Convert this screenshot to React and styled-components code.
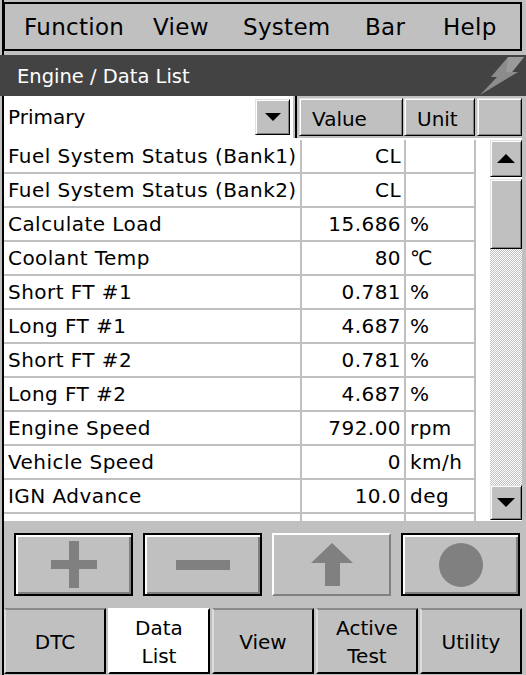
import React from 'react';
import styled, { createGlobalStyle, css } from 'styled-components';

const GRAY = '#c0c0c0';
const DARK = '#808080';

const GlobalStyle = createGlobalStyle`
  html, body { margin: 0; padding: 0; background: ${GRAY}; }
  body { font-family: "DejaVu Sans", Verdana, sans-serif; color: #000; }
  * { box-sizing: border-box; }
`;

const raised = css`
  background: ${GRAY};
  border: 1px solid;
  border-color: #e0e0e0 #000 #000 #e0e0e0;
  box-shadow: inset 1px 1px #fff, inset -1px -1px ${DARK};
`;

const Screen = styled.div`
  width: 526px;
  height: 675px;
  background: ${GRAY};
  display: flex;
  flex-direction: column;
  overflow: hidden;
  font-family: "DejaVu Sans", Verdana, sans-serif;
`;

const MenuArea = styled.div`
  margin-left: 2px;
  border-left: 2px solid #000;
  padding: 2px 4px 4px 0;
`;

const MenuBar = styled.nav`
  height: 49px;
  border: 2px solid #000;
  border-left-width: 1px;
  padding-left: 19px;
  display: grid;
  grid-template-columns: 129px 90px 122px 78px 1fr;
  align-items: center;
`;

const MenuItem = styled.span`
  font-size: 23px;
  letter-spacing: 0.3px;
`;

const TitleBar = styled.header`
  height: 41px;
  background: #434343;
  color: #fff;
  display: flex;
  align-items: center;
  padding-left: 17px;
  padding-top: 2px;
  font-size: 19.5px;
`;

const Bolt = styled.svg`
  margin-left: auto;
  margin-right: 2px;
  align-self: flex-end;
`;

const Body = styled.main`
  flex: 1;
  margin-left: 2px;
  border-left: 2px solid #000;
  display: flex;
  flex-direction: column;
`;

const HeaderRow = styled.div`
  height: 42px;
  display: flex;
  align-items: stretch;
`;

const Combo = styled.div`
  width: 289px;
  background: #fff;
  display: flex;
  align-items: center;
  padding-left: 4px;
  font-size: 20px;
`;

const DropButton = styled.div`
  ${raised};
  margin-left: auto;
  margin-right: 3px;
  width: 35px;
  height: 36px;
  display: flex;
  align-items: center;
  justify-content: center;
`;

const Divider = styled.div`
  width: 2px;
  margin: 0 2px;
  background: #000;
`;

const HeadButton = styled.div`
  ${raised};
  margin-top: 2px;
  margin-bottom: 2px;
  margin-left: ${p => p.$gap}px;
  width: ${p => p.$w}px;
  display: flex;
  align-items: center;
  padding-left: 12px;
  font-size: 20px;
  padding-top: 3px;
`;

const ListArea = styled.div`
  height: 383px;
  width: 518px;
  background: #fff;
  display: flex;
`;

const Table = styled.div`
  width: 472px;
  padding-top: 2px;
  overflow: hidden;
`;

const Row = styled.div`
  display: grid;
  grid-template-columns: 298px 104px 70px;
  height: 34px;
`;

const Cell = styled.div`
  border-right: 2px solid ${GRAY};
  border-bottom: 2px solid ${GRAY};
  display: flex;
  align-items: center;
  font-size: 20px;
  letter-spacing: 0.45px;
  white-space: nowrap;
  overflow: hidden;
  justify-content: ${p => (p.$right ? 'flex-end' : 'flex-start')};
  padding: ${p => (p.$right ? '0 3px 0 0' : '0 0 0 4px')};
`;

const Gutter = styled.div`
  width: 14px;
`;

const ScrollBar = styled.div`
  width: 32px;
  padding: 2px 0 1px;
  display: flex;
  flex-direction: column;
`;

const ScrollButton = styled.div`
  ${raised};
  height: ${p => p.$h}px;
  margin-top: ${p => p.$mt || 0}px;
  display: flex;
  align-items: center;
  justify-content: center;
`;

const Track = styled.div`
  flex: 1;
  background-color: #fff;
  background-image: repeating-conic-gradient(#fff 0 25%, ${GRAY} 0 50%);
  background-size: 2px 2px;
`;

const Controls = styled.div`
  padding: 12px 0 0 10px;
  display: grid;
  grid-template-columns: repeat(4, 119px);
  column-gap: 10px;
`;

const ActionButton = styled.button`
  height: 63px;
  padding: 0;
  background: ${GRAY};
  display: flex;
  align-items: center;
  justify-content: center;
  ${p =>
    p.$plain
      ? css`
          border: 2px solid;
          border-color: #fff ${DARK} ${DARK} #fff;
        `
      : css`
          border: 2px solid #000;
          box-shadow: inset 2px 2px #fff, inset -2px -2px ${DARK};
        `}
`;

const Tabs = styled.div`
  margin-top: 12px;
  height: 66px;
  width: 518px;
  display: grid;
  grid-template-columns: repeat(5, 1fr);
  column-gap: 2px;
`;

const Tab = styled.div`
  border: 2px solid;
  border-color: ${p => (p.$active ? '#fff #000 #000 #fff' : '#8a8a8a #000 #000 #dcdcdc')};
  background: ${p => (p.$active ? '#fff' : GRAY)};
  display: flex;
  align-items: center;
  justify-content: center;
  text-align: center;
  font-size: 20px;
  line-height: 28px;
  padding-top: 1px;
`;

const Down = ({ w = 16, h = 8 }) => (
  <svg width={w} height={h} viewBox={`0 0 ${w} ${h}`}>
    <polygon points={`0,0 ${w},0 ${w / 2},${h}`} fill="#000" />
  </svg>
);

const Up = ({ w = 18, h = 9 }) => (
  <svg width={w} height={h} viewBox={`0 0 ${w} ${h}`}>
    <polygon points={`0,${h} ${w},${h} ${w / 2},0`} fill="#000" />
  </svg>
);

const rows = [
  ['Fuel System Status (Bank1)', 'CL', ''],
  ['Fuel System Status (Bank2)', 'CL', ''],
  ['Calculate Load', '15.686', '%'],
  ['Coolant Temp', '80', '℃'],
  ['Short FT #1', '0.781', '%'],
  ['Long FT #1', '4.687', '%'],
  ['Short FT #2', '0.781', '%'],
  ['Long FT #2', '4.687', '%'],
  ['Engine Speed', '792.00', 'rpm'],
  ['Vehicle Speed', '0', 'km/h'],
  ['IGN Advance', '10.0', 'deg'],
  ['', '', ''],
];

export default function App() {
  return (
    <Screen>
      <GlobalStyle />
      <MenuArea>
        <MenuBar>
          <MenuItem>Function</MenuItem>
          <MenuItem>View</MenuItem>
          <MenuItem>System</MenuItem>
          <MenuItem>Bar</MenuItem>
          <MenuItem>Help</MenuItem>
        </MenuBar>
      </MenuArea>
      <TitleBar>
        Engine / Data List
        <Bolt width="46" height="40" viewBox="0 0 46 40">
          <polygon points="30,1 46,1 34,16 40,16 2,39 19,21 13,21" fill="#8c8c8c" />
          <polygon points="30,1 46,1 34,16 28,16" fill="#9a9a9a" />
        </Bolt>
      </TitleBar>
      <Body>
        <HeaderRow>
          <Combo>
            Primary
            <DropButton>
              <Down />
            </DropButton>
          </Combo>
          <Divider />
          <HeadButton $w={104} $gap={0}>Value</HeadButton>
          <HeadButton $w={71} $gap={1}>Unit</HeadButton>
          <HeadButton $w={45} $gap={2} />
        </HeaderRow>
        <ListArea>
          <Table>
            {rows.map(([name, value, unit], i) => (
              <Row key={i}>
                <Cell>{name}</Cell>
                <Cell $right>{value}</Cell>
                <Cell>{unit}</Cell>
              </Row>
            ))}
          </Table>
          <Gutter />
          <ScrollBar>
            <ScrollButton $h={37}>
              <Up />
            </ScrollButton>
            <ScrollButton $h={70} $mt={2} />
            <Track />
            <ScrollButton $h={35}>
              <Down w={18} h={9} />
            </ScrollButton>
          </ScrollBar>
        </ListArea>
        <Controls>
          <ActionButton aria-label="Add">
            <svg width="46" height="47" viewBox="0 0 46 47">
              <rect x="0" y="19" width="46" height="9" fill={DARK} />
              <rect x="18" y="0" width="10" height="47" fill={DARK} />
            </svg>
          </ActionButton>
          <ActionButton aria-label="Remove">
            <svg width="54" height="10" viewBox="0 0 54 10">
              <rect x="0" y="0" width="54" height="10" fill={DARK} />
            </svg>
          </ActionButton>
          <ActionButton $plain aria-label="Up">
            <svg width="42" height="43" viewBox="0 0 42 43">
              <polygon points="21,0 42,20 0,20" fill={DARK} />
              <rect x="14" y="20" width="15" height="23" fill={DARK} />
            </svg>
          </ActionButton>
          <ActionButton aria-label="Record">
            <svg width="44" height="44" viewBox="0 0 44 44">
              <circle cx="22" cy="22" r="22" fill={DARK} />
            </svg>
          </ActionButton>
        </Controls>
        <Tabs>
          <Tab>DTC</Tab>
          <Tab $active>Data<br />List</Tab>
          <Tab>View</Tab>
          <Tab>Active<br />Test</Tab>
          <Tab>Utility</Tab>
        </Tabs>
      </Body>
    </Screen>
  );
}
